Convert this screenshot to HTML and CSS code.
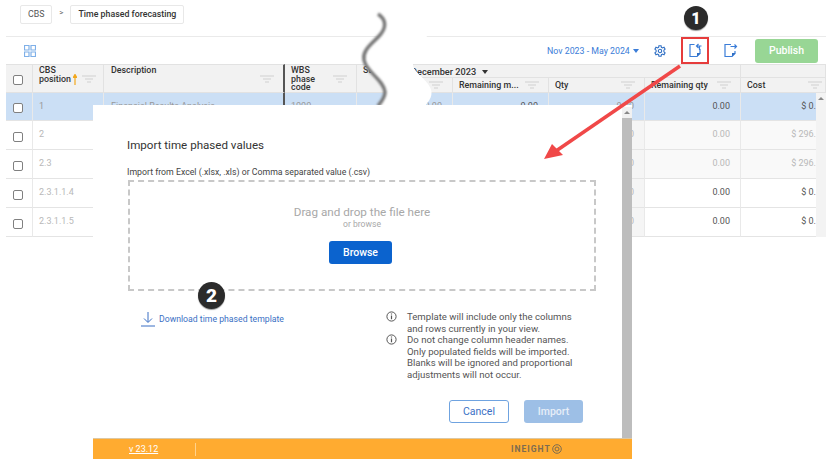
FILE: index.html
```html
<!DOCTYPE html>
<html>
<head>
    <title>Time phased forecasting</title>
    <meta charset="UTF-8">
    <link rel="stylesheet" href="styles.css">
</head>
<body>
    <svg class="defs" width="0" height="0">
        <symbol id="filter" viewBox="0 0 14 8">
            <path d="M0 1h14M3 4h8M5 7h4" stroke="#cfcfcf" stroke-width="1.2" fill="none"/>
        </symbol>
        <symbol id="info" viewBox="0 0 11 11">
            <circle cx="5.5" cy="5.5" r="4.6" stroke="#555" stroke-width="1" fill="none"/>
            <path d="M5.5 4.6v3.6M5.5 2.6v1" stroke="#555" stroke-width="1.2" fill="none"/>
        </symbol>
    </svg>

    <div class="breadcrumb">
        <span class="crumb">CBS</span>
        <span class="crumb-sep">&gt;</span>
        <span class="crumb current">Time phased forecasting</span>
    </div>

    <div class="toolbar">
        <svg class="grid-icon" width="12" height="12" viewBox="0 0 12 12">
            <path d="M.5.5h4.5v4.500H.5zM7 .5h4.500v4.500H7zM.5 7h4.500v4.500H.5zM7 7h4.500v4.500H7z" fill="none" stroke="#7fb0e8" stroke-width="1.200"/>
        </svg>
        <span class="date-range">Nov 2023 - May 2024 <i class="caret"></i></span>
        <svg class="gear" width="12" height="12" viewBox="0 0 12 12">
            <path d="M4.900.8h2.200l.3 1.500 1.200.6 1.400-.6 1.100 1.900-1.200 1v1.600l1.200 1-1.100 1.900-1.400-.6-1.200.6-.3 1.500H4.900l-.3-1.500-1.200-.6-1.400.6-1.100-1.900 1.200-1V5.200L.9 4.200 2 2.300l1.400.6 1.200-.6z" fill="none" stroke="#2f6fc4" stroke-width="1.100"/>
            <circle cx="6" cy="6" r="1.700" fill="none" stroke="#2f6fc4" stroke-width="1.100"/>
        </svg>
        <span class="tool-box">
            <svg width="15" height="15" viewBox="0 0 15 15">
                <path d="M6.500 1.500H2v12h7l3-3V6" fill="none" stroke="#3b7dd8" stroke-width="1.200"/>
                <path d="M9 13.500l3.500-3.500H9z" fill="#2f6fc4"/>
                <path d="M13.500 3H8.500M10.500 1L8.500 3l2 2M11.500 3v4" fill="none" stroke="#3b7dd8" stroke-width="1.200"/>
            </svg>
        </span>
        <svg class="export-icon" width="15" height="15" viewBox="0 0 15 15">
            <path d="M8 1.500H2v12h7l3-3V8" fill="none" stroke="#3b7dd8" stroke-width="1.200"/>
            <path d="M9 13.500l3.500-3.500H9z" fill="#2f6fc4"/>
            <path d="M7.500 3.500h6M11.500 1.500l2 2-2 2" fill="none" stroke="#3b7dd8" stroke-width="1.200"/>
        </svg>
        <button class="publish">Publish</button>
    </div>

    <div class="table">
        <div class="head span2 check-cell"><input type="checkbox" class="check"></div>
        <div class="head span2"><span>CBS<br>position</span>
            <svg class="sort" width="4" height="11" viewBox="0 0 4 11"><path d="M2 11V2M.3 3.500L2 .5l1.700 3z" stroke="#f2a81d" stroke-width="1.200" fill="#f2a81d"/></svg>
            <svg class="filter"><use href="#filter"/></svg></div>
        <div class="head span2 spread desc-head"><span>Description</span><svg class="filter"><use href="#filter"/></svg></div>
        <div class="head span2 spread"><span>WBS<br>phase<br>code</span><svg class="filter"><use href="#filter"/></svg></div>
        <div class="head span2 spread"><span>Start</span></div>
        <div class="head month">December 2023 <i class="caret dark"></i></div>
        <div class="head blank"></div>
        <div class="head low spread"><svg class="filter push"><use href="#filter"/></svg></div>
        <div class="head low spread"><span>Remaining m...</span><svg class="filter"><use href="#filter"/></svg></div>
        <div class="head low spread"><span>Qty</span><svg class="filter"><use href="#filter"/></svg></div>
        <div class="head low spread"><span>Remaining qty</span><svg class="filter"><use href="#filter"/></svg></div>
        <div class="head low spread cost-head"><span>Cost</span><svg class="filter"><use href="#filter"/></svg></div>

        <div class="cell sel check-cell"><input type="checkbox" class="check"></div>
        <div class="cell sel faint">1</div>
        <div class="cell sel faint desc">Financial Results Analysis</div>
        <div class="cell sel faint">1000</div>
        <div class="cell sel"></div>
        <div class="cell sel num faint">0.00</div>
        <div class="cell sel num">0.00</div>
        <div class="cell sel num faint">0.00</div>
        <div class="cell sel num">0.00</div>
        <div class="cell sel cost">$ 0.</div>
        <div class="table-scroll"><i class="up"></i></div>

        <div class="cell check-cell"><input type="checkbox" class="check"></div>
        <div class="cell faint">2</div>
        <div class="cell desc"></div>
        <div class="cell"></div>
        <div class="cell"></div>
        <div class="cell"></div>
        <div class="cell shade"></div>
        <div class="cell shade num faint">0.00</div>
        <div class="cell pale num faint">0.00</div>
        <div class="cell pale cost faint">$ 296.</div>

        <div class="cell check-cell"><input type="checkbox" class="check"></div>
        <div class="cell faint">2.3</div>
        <div class="cell desc"></div>
        <div class="cell"></div>
        <div class="cell"></div>
        <div class="cell"></div>
        <div class="cell shade"></div>
        <div class="cell shade num faint">0.00</div>
        <div class="cell pale num faint">0.00</div>
        <div class="cell pale cost faint">$ 296.</div>

        <div class="cell check-cell"><input type="checkbox" class="check"></div>
        <div class="cell faint">2.3.1.1.4</div>
        <div class="cell desc"></div>
        <div class="cell"></div>
        <div class="cell"></div>
        <div class="cell"></div>
        <div class="cell shade"></div>
        <div class="cell shade num faint">0.00</div>
        <div class="cell num">0.00</div>
        <div class="cell cost">$ 0.</div>

        <div class="cell check-cell"><input type="checkbox" class="check"></div>
        <div class="cell faint">2.3.1.1.5</div>
        <div class="cell desc"></div>
        <div class="cell"></div>
        <div class="cell"></div>
        <div class="cell"></div>
        <div class="cell shade"></div>
        <div class="cell shade num faint">0.00</div>
        <div class="cell num">0.00</div>
        <div class="cell cost">$ 0.</div>
    </div>

    <!-- torn edge sits between the table and the dialog -->
    <svg class="tear" width="826" height="465" viewBox="0 0 826 465">
        <defs><filter id="soft" x="-30%" y="-10%" width="160%" height="120%"><feGaussianBlur stdDeviation="1"/></filter></defs>
        <path d="M378 14C387 20 386 28 380 35C372 44 362 50 364 60C366 72 384 80 385 92C385 98 381 102 378 106L425 106C432 98 434 92 428 84C422 76 412 70 413 64L427 36L427 14Z" fill="#fff"/>
        <path d="M378 14C387 20 386 28 380 35C372 44 362 50 364 60C366 72 384 80 385 92C385 98 381 102 378 106" fill="none" stroke="#777" stroke-width="3.500" filter="url(#soft)"/>
    </svg>

    <div class="modal">
        <div class="modal-body">
            <h2>Import time phased values</h2>
            <p class="import-label">Import from Excel (.xlsx, .xls) or Comma separated value (.csv)</p>
            <div class="dropzone">
                <div class="drop-title">Drag and drop the file here</div>
                <div class="drop-sub">or browse</div>
                <button class="browse">Browse</button>
            </div>
            <div class="details">
                <a class="download">
                    <svg width="14" height="16" viewBox="0 0 14 16">
                        <path d="M7 1v10M3 7.500l4 4 4-4M0 15h14" fill="none" stroke="#3a6fc4" stroke-width="1"/>
                    </svg>
                    Download time phased template
                </a>
                <div class="notes">
                    <div class="note"><svg class="info"><use href="#info"/></svg><span>Template will include only the columns and rows currently in your view.</span></div>
                    <div class="note"><svg class="info"><use href="#info"/></svg><span>Do not change column header names. Only populated fields will be imported. Blanks will be ignored and proportional adjustments will not occur.</span></div>
                </div>
            </div>
            <div class="actions">
                <button class="cancel">Cancel</button>
                <button class="import">Import</button>
            </div>
        </div>
        <div class="modal-scroll"><i class="up"></i><div class="thumb"></div></div>
        <div class="footer">
            <a class="version">v 23.12</a>
            <span class="divider"></span>
            <span class="brand">INEIGHT
                <svg width="10" height="10" viewBox="0 0 10 10">
                    <circle cx="5" cy="5" r="4.300" fill="none" stroke="#7d6c50" stroke-width="1"/>
                    <circle cx="5" cy="5" r="2" fill="none" stroke="#7d6c50" stroke-width="1"/>
                </svg>
            </span>
        </div>
    </div>

    <svg class="marks" width="826" height="465" viewBox="0 0 826 465">
        <path d="M680 66L556 151" stroke="#f04848" stroke-width="3.500" fill="none"/>
        <path d="M544 159L552 144L563 155Z" fill="#f04848"/>
    </svg>
    <div class="badge one">1</div>
    <div class="badge two">2</div>
</body>
</html>
```

FILE: styles.css
```css
* {
    box-sizing: border-box;
}
body {
    font-family: Roboto, "Liberation Sans", sans-serif;
    margin: 0;
    background: white;
    color: #333;
    font-size: 10px;
}
.defs {
    position: absolute;
}
.breadcrumb {
    display: flex;
    align-items: center;
    height: 37px;
    margin-left: 6px;
    padding: 0 0 7px 14px;
    border-bottom: 1px solid #eaeaea;
}
.crumb {
    border: 1px solid #e8e8e8;
    border-radius: 2px;
    padding: 0 7px;
    height: 19px;
    line-height: 17px;
    color: #555;
    font-size: 8.800px;
}
.crumb.current {
    color: #333;
    font-weight: 500;
}
.crumb-sep {
    width: 18px;
    text-align: center;
    font-size: 8px;
    color: #666;
    padding-bottom: 4px;
}
.toolbar {
    display: flex;
    align-items: center;
    height: 27px;
    margin-left: 6px;
    padding-left: 18px;
}
.grid-icon {
    margin-right: auto;
}
.date-range {
    color: #3b7dd8;
    font-size: 8.800px;
    margin-right: 15px;
}
.caret {
    display: inline-block;
    border: 3px solid transparent;
    border-top: 4px solid #3b7dd8;
    border-bottom: 0;
    vertical-align: 1px;
    margin-left: 1px;
}
.caret.dark {
    border-width: 3.500px;
    border-top: 4px solid #333;
    border-bottom: 0;
    margin-left: 6px;
    vertical-align: 0;
}
.gear {
    margin-right: 15px;
}
.tool-box {
    display: flex;
    align-items: center;
    justify-content: center;
    width: 28px;
    height: 27px;
    border: 2px solid #e63c3c;
    margin-right: 14px;
}
.export-icon {
    margin-right: 17px;
}
.publish {
    width: 63px;
    height: 24px;
    margin-right: 8px;
    border: none;
    border-radius: 3px;
    background: #98d695;
    color: white;
    font: 500 10.500px Roboto, sans-serif;
}
.table {
    display: grid;
    margin-left: 6px;
    grid-template-columns: 27px 71px 181px 72px 48px 48px 96px 96px 96px 75px 10px;
    grid-template-rows: 13px 16px 28px 29px 29px 29px 29px;
}
.head {
    background: #f2f2f2;
    border-right: 1px solid #e2e2e2;
    border-top: 1px solid #e2e2e2;
    border-bottom: 1px solid #e2e2e2;
    padding: 1px 9px 0 6px;
    font-weight: 500;
    font-size: 8.900px;
    line-height: 8.700px;
    color: #333;
    white-space: nowrap;
    display: flex;
    align-items: center;
}
.span2 {
    grid-row: span 2;
    padding-top: 1px;
}
.span2 span {
    align-self: flex-start;
}
.spread {
    justify-content: space-between;
}
.desc-head {
    border-right: 2px solid #555;
    padding-left: 7px;
}
.month {
    grid-column: 6 / 10;
    border-bottom: none;
    font-size: 9.200px;
    padding: 2px 0 0 6px;
}
.blank {
    grid-column: 10 / 12;
    border-bottom: none;
}
.low {
    padding: 0 9px 0 6px;
}
.cost-head {
    grid-column: 10 / 12;
    padding-right: 3px;
}
.sort {
    flex: none;
    margin-left: 2px;
}
.filter {
    width: 14px;
    height: 8px;
    flex: none;
}
.sort + .filter {
    margin-left: 5px;
}
.push {
    margin-left: auto;
}
.cell {
    border-right: 1px solid #e9e9e9;
    border-bottom: 1px solid #e4e4e4;
    padding: 8px 6px 0;
    font-size: 9px;
    line-height: 11px;
    color: #555;
    white-space: nowrap;
    overflow: hidden;
}
.sel {
    background: #cbdff5;
}
.shade {
    background: #f5f5f5;
}
.pale {
    background: #f9f9f9;
}
.faint {
    color: #b8b8b8;
}
.sel.faint {
    color: #999;
}
.desc {
    border-right: 2px solid #555;
    padding-left: 7px;
}
.num {
    text-align: right;
    padding-right: 10px;
}
.cost {
    text-align: right;
    padding-right: 0;
    border-right: none;
}
.check-cell {
    display: flex;
    align-items: center;
    justify-content: center;
    padding: 3px 0 0;
}
.check {
    appearance: none;
    width: 10px;
    height: 10px;
    margin: 0 2px 0 0;
    background: white;
    border: 1px solid #808080;
    border-radius: 2px;
}
.table-scroll {
    grid-column: 11;
    grid-row: 3 / 8;
    background: #f3f3f3;
    padding-top: 4px;
}
.up {
    display: block;
    width: 0;
    margin: 0 auto;
    border: 3px solid transparent;
    border-top: 0;
    border-bottom: 3px solid #888;
}

.tear, .marks {
    position: absolute;
    left: 0;
    top: 0;
    pointer-events: none;
}
.modal {
    position: absolute;
    left: 93px;
    top: 105px;
    width: 539px;
    height: 354px;
    background: white;
}
.modal-body {
    padding: 33px 36px 0 34px;
}
h2 {
    margin: 0;
    font-size: 11.600px;
    font-weight: 400;
    line-height: 15px;
    color: #333;
}
.import-label {
    margin: 13px 0 0;
    font-size: 8.750px;
    line-height: 12px;
    color: #444;
}
.dropzone {
    display: flex;
    flex-direction: column;
    align-items: center;
    width: 468px;
    height: 111px;
    margin: 2px 0 0 1px;
    padding-top: 23px;
    border: 2px dashed #c8c8c8;
}
.drop-title {
    font-size: 11.700px;
    line-height: 14px;
    color: #a8a8a8;
}
.drop-sub {
    font-size: 8.600px;
    line-height: 10px;
    color: #a8a8a8;
}
.browse {
    width: 63px;
    height: 23px;
    margin: 12px 3px 0 0;
    border: none;
    border-radius: 3px;
    background: #0b63ce;
    color: white;
    font: 500 10.500px Roboto, sans-serif;
}
.details {
    display: flex;
    padding-top: 20px;
}
.download {
    display: flex;
    align-items: center;
    gap: 4px;
    width: 245px;
    height: 16px;
    margin-left: 14px;
    font-size: 8.700px;
    color: #3a6fc4;
}
.notes {
    width: 200px;
}
.note {
    display: flex;
    gap: 10px;
    font-size: 9.600px;
    line-height: 11.500px;
    color: #555;
}
.info {
    flex: none;
    width: 11px;
    height: 11px;
}
.actions {
    display: flex;
    justify-content: flex-end;
    gap: 15px;
    margin-top: 20px;
    padding-right: 13px;
}
.actions button {
    width: 60px;
    height: 23px;
    border-radius: 3px;
    font: 400 10.500px Roboto, sans-serif;
}
.cancel {
    background: white;
    color: #3a6fc4;
    border: 1px solid #6fa3e0;
}
.actions .import {
    width: 59px;
    background: #9dbfe6;
    color: #e6eef8;
    border: none;
    font-weight: 500;
}
.modal-scroll {
    position: absolute;
    right: 0;
    top: 2px;
    bottom: 21px;
    width: 10px;
    background: #f1f1f1;
    padding-top: 4px;
}
.thumb {
    background: #bdbdbd;
    height: 320px;
    margin-top: 4px;
}
.footer {
    position: absolute;
    left: 0;
    right: 0;
    bottom: 0;
    display: flex;
    align-items: center;
    height: 21px;
    padding-left: 36px;
    background: #ffab30;
    border-top: 1px solid #dcc8a4;
}
.version {
    width: 66px;
    color: white;
    font-size: 9px;
    text-decoration: underline;
}
.divider {
    width: 1px;
    height: 13px;
    background: #ffd28c;
}
.brand {
    display: flex;
    align-items: center;
    gap: 1px;
    margin-left: 315px;
    color: #7d6c50;
    font-size: 8.500px;
    font-weight: 700;
    letter-spacing: 1px;
}
.badge {
    position: absolute;
    display: flex;
    align-items: center;
    justify-content: center;
    border-radius: 50%;
    background: #2b2b2b;
    color: white;
    font-weight: 900;
    box-shadow: 0 1px 1px #999;
}
.badge.one {
    left: 684px;
    top: 6px;
    width: 24px;
    height: 24px;
    font-size: 16px;
}
.badge.two {
    left: 198px;
    top: 282px;
    width: 27px;
    height: 27px;
    font-size: 19px;
}
```
